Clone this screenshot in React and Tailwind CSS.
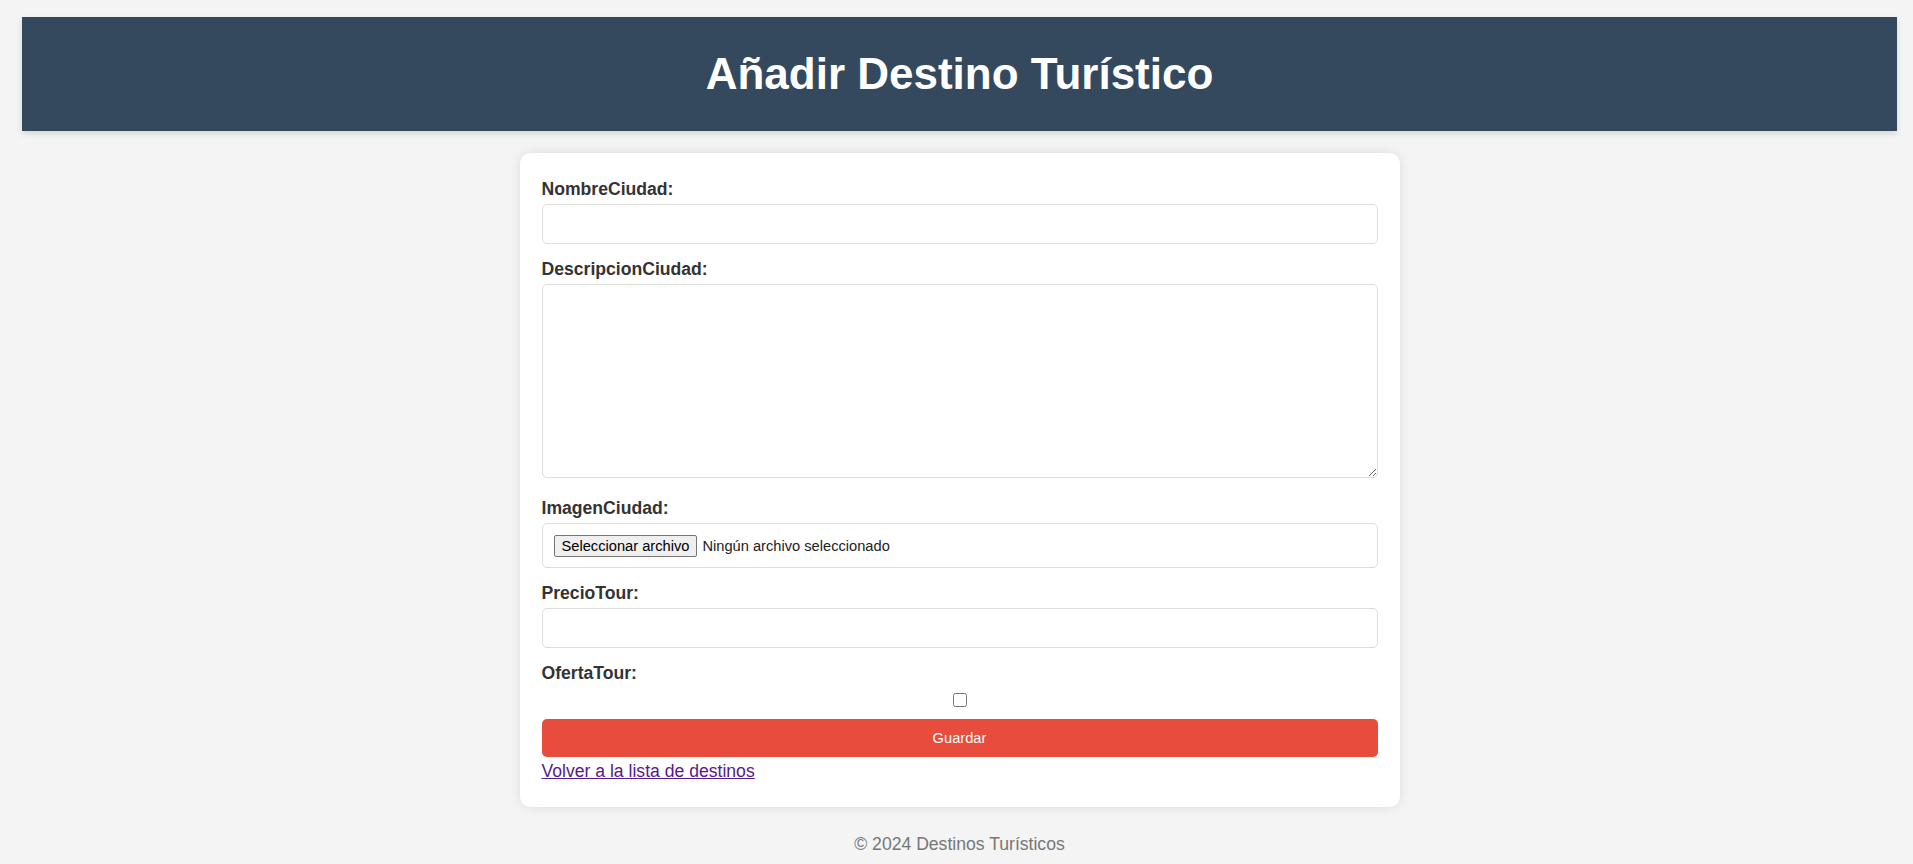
import { useState } from "react";

const Field = ({ label, children, gap = "mb-[11px]" }) => (
  <div className={gap}>
    <label className="block pt-[4px] mb-[5px] leading-[20px] font-bold text-[17.6px] text-[#333]">{label}</label>
    {children}
  </div>
);

const App = () => {
  const [nombre, setNombre] = useState("");
  const [descripcion, setDescripcion] = useState("");
  const [precio, setPrecio] = useState("");
  const [oferta, setOferta] = useState(false);

  return (
    <div className="min-h-screen bg-[#f4f4f4] pl-[22px] pr-[16px] pt-[17px] font-['Liberation_Sans',Arial,sans-serif] text-[#333]">
      <header className="h-[114px] flex items-center justify-center bg-[#34495e] shadow-[0_3px_6px_rgba(0,0,0,0.12)]">
        <h1 className="text-[44px] font-bold text-white">Añadir Destino Turístico</h1>
      </header>

      <div className="w-[880px] mx-auto mt-[22px] bg-white rounded-[10px] p-[22px] shadow-[0_0_12px_rgba(0,0,0,0.1)]">
        <Field label="NombreCiudad:">
          <input
            type="text"
            value={nombre}
            onChange={(e) => setNombre(e.target.value)}
            className="block w-full h-[40px] border border-[#ddd] rounded-[5px] px-[11px] outline-none"
          />
        </Field>

        <Field label="DescripcionCiudad:" gap="mb-[16px]">
          <textarea
            value={descripcion}
            onChange={(e) => setDescripcion(e.target.value)}
            className="block w-full h-[194px] border border-[#ddd] rounded-[5px] p-[11px] outline-none"
          />
        </Field>

        <Field label="ImagenCiudad:">
          <div className="flex items-center h-[45px] border border-[#ddd] rounded-[5px] px-[11px] text-[14.67px]">
            <span className="h-[22px] flex items-center px-[7px] bg-[#efefef] border border-[#767676] rounded-[2px] text-black">
              Seleccionar archivo
            </span>
            <span className="ml-[5px] text-[#222]">Ningún archivo seleccionado</span>
          </div>
        </Field>

        <Field label="PrecioTour:">
          <input
            type="text"
            value={precio}
            onChange={(e) => setPrecio(e.target.value)}
            className="block w-full h-[40px] border border-[#ddd] rounded-[5px] px-[11px] outline-none"
          />
        </Field>

        <Field label="OfertaTour:" gap="mb-0">
          <div className="flex justify-center mt-[10px] mb-[12px] h-[14px]">
            <input
              type="checkbox"
              checked={oferta}
              onChange={(e) => setOferta(e.target.checked)}
              className="w-[14px] h-[14px] m-0"
            />
          </div>
        </Field>

        <button className="block w-full h-[38px] bg-[#e74c3c] text-white text-[14.67px] rounded-[5px]">
          Guardar
        </button>

        <div className="mt-[4px] mb-[3px] leading-[20px]">
          <a href="#" className="text-[17.6px] text-[#551a8b] underline">Volver a la lista de destinos</a>
        </div>
      </div>

      <footer className="text-center mt-[27px] pb-[20px] leading-[20px] text-[17.6px] text-[#777]">
        © 2024 Destinos Turísticos
      </footer>
    </div>
  );
};

export default App;
